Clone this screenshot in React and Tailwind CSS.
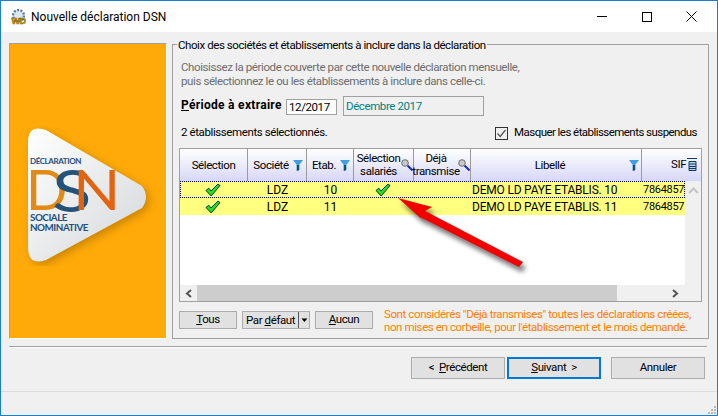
const ui = { fontFamily: 'Roboto, "Liberation Sans", sans-serif' };

function Check() {
  return (
    <svg width="16" height="14" viewBox="0 0 16 14" className="block">
      <path d="M1 7.5 L3.8 5.2 L6 8 L13 1 L15 2.6 L6.2 13 Z" fill="#22e02a" stroke="#0c3a0c" strokeWidth="1" strokeLinejoin="round" />
    </svg>
  );
}

function Funnel() {
  return (
    <svg width="10" height="11" viewBox="0 0 10 11" className="block">
      <path d="M0 0 H10 L6.2 5 V10 L3.8 11 V5 Z" fill="#3f9fe0" />
      <path d="M3.8 5 L6.2 5 V10 L3.8 11 Z" fill="#17506f" />
    </svg>
  );
}

function Lens() {
  return (
    <svg width="12" height="12" viewBox="0 0 12 12" className="block">
      <line x1="6.5" y1="6.5" x2="11.5" y2="11.5" stroke="#1c28c8" strokeWidth="2" />
      <circle cx="4" cy="4" r="3.3" fill="#c9c9c9" stroke="#6d6d6d" strokeWidth="1" />
    </svg>
  );
}

function ColumnsIcon() {
  return (
    <svg width="10" height="13" viewBox="0 0 10 13" className="block">
      <path d="M0 0.5 H10 M2 3.5 H9 V12.5 H2 Z M2 6 H9 M2 8.5 H9 M2 10.5 H9" fill="#b9d2ea" stroke="#123a66" strokeWidth="1" />
    </svg>
  );
}

function Logo() {
  return (
    <svg width="140" height="140" viewBox="0 0 140 140" className="block">
      <defs>
        <linearGradient id="tri" x1="0" y1="0" x2="1" y2="1">
          <stop offset="0" stopColor="#ffffff" />
          <stop offset="1" stopColor="#d3d7da" />
        </linearGradient>
        <filter id="soft" x="-20%" y="-20%" width="140%" height="140%">
          <feGaussianBlur stdDeviation="4" />
        </filter>
      </defs>
      <path d="M8 16 Q8 -2 26 4 L122 60 Q130 71 122 82 L26 134 Q8 140 8 122 Z" fill="#9a6400" opacity="0.55" filter="url(#soft)" transform="translate(3 3)" />
      <path d="M8 16 Q8 -2 26 4 L122 60 Q130 71 122 82 L26 134 Q8 140 8 122 Z" fill="url(#tri)" />
      <text x="10" y="38" fontFamily="Lato, sans-serif" fontWeight="700" fontSize="7.5" fill="#24507e" textLength="51" lengthAdjust="spacingAndGlyphs">DÉCLARATION</text>
      <text x="6" y="84" fontFamily="Lato, sans-serif" fontSize="56" fontWeight="400" fill="#e08a17" textLength="41" lengthAdjust="spacingAndGlyphs">D</text>
      <text x="32" y="86" fontFamily="Lato, sans-serif" fontSize="59" fontWeight="400" fill="#245278" textLength="39" lengthAdjust="spacingAndGlyphs">S</text>
      <text x="53" y="84" fontFamily="Lato, sans-serif" fontSize="56" fontWeight="400" fill="#e4630f" textLength="47" lengthAdjust="spacingAndGlyphs">N</text>
      <text x="10" y="95" fontFamily="Lato, sans-serif" fontWeight="700" fontSize="8.5" fill="#24507e" textLength="37" lengthAdjust="spacingAndGlyphs">SOCIALE</text>
      <text x="10" y="105" fontFamily="Lato, sans-serif" fontWeight="700" fontSize="8.5" fill="#24507e" textLength="58" lengthAdjust="spacingAndGlyphs">NOMINATIVE</text>
    </svg>
  );
}

function Arrow() {
  return (
    <svg width="150" height="90" viewBox="0 0 150 90" className="absolute left-[385px] top-[190px] pointer-events-none">
      <defs>
        <filter id="arrowShadow" x="-20%" y="-30%" width="140%" height="160%">
          <feGaussianBlur stdDeviation="2.5" />
        </filter>
      </defs>
      <path d="M12 7 L46 16 L39 20 L137 71 L133 76 L34 26 L39 31 Z" fill="#000" opacity="0.55" filter="url(#arrowShadow)" transform="translate(3 5)" />
      <path d="M12 7 L46 16 L39 20 L137 71 L133 76 L34 26 L39 31 Z" fill="#f40000" />
    </svg>
  );
}

function HeaderCell({ children, border = true }) {
  return (
    <div className={`relative h-[32px] flex items-center justify-center text-center leading-[13px] whitespace-nowrap bg-gradient-to-b from-white to-[#d7d7f7] ${border ? 'border-r border-[#9a9a9a]' : ''}`}>
      {children}
    </div>
  );
}

function Row({ etab, salaries, focused }) {
  return (
    <div className={`grid grid-cols-[68px_59px_47px_60px_57px_171px_43px] h-[17px] bg-[#ffff80] items-center text-center overflow-hidden ${focused ? 'outline-1 -outline-offset-1 outline-dotted outline-[#000080]' : ''}`}>
      <div className="flex justify-center pr-[2px]"><Check /></div>
      <div className="text-[12px] tracking-normal">LDZ</div>
      <div className="text-[12px] tracking-normal">{etab}</div>
      <div className="flex justify-center pr-[3px]">{salaries && <Check />}</div>
      <div />
      <div className="text-left pl-[1px] whitespace-nowrap text-[12px] tracking-[-0.2px]">DEMO LD PAYE ETABLIS. {etab}</div>
      <div className="text-left pl-[1px] whitespace-nowrap text-[11px] tracking-[-0.3px]">7864857</div>
    </div>
  );
}

function Btn({ children, className = '' }) {
  return (
    <button className={`border border-[#adadad] bg-[#e1e1e1] flex items-center justify-center text-black whitespace-nowrap tracking-[-0.4px] ${className}`}>
      {children}
    </button>
  );
}

export default function App() {
  return (
    <div style={ui} className="relative w-[718px] h-[416px] overflow-hidden bg-[#f0f0f0] border border-[#1a7fce] text-[11.5px] tracking-[-0.4px] text-black flex flex-col">
      <div className="h-[31px] bg-white flex items-center shrink-0">
        <svg width="17" height="16" viewBox="0 0 17 16" className="ml-[9px] mr-[4px]">
          <circle cx="8.5" cy="6.5" r="5.5" fill="#dfe6ee" stroke="#5b7da3" strokeDasharray="2 1.4" strokeWidth="2.4" />
          <text x="8.5" y="14.5" textAnchor="middle" fontFamily="Liberation Sans, sans-serif" fontWeight="700" fontSize="9" fill="#f0b010" stroke="#6a4c00" strokeWidth="0.5">WD</text>
        </svg>
        <span className="text-[12px] tracking-normal">Nouvelle déclaration DSN</span>
        <div className="ml-auto mr-[3px] flex items-center">
          <div className="w-[45px] h-[30px] flex items-center justify-center">
            <div className="w-[10px] h-px bg-black" />
          </div>
          <div className="w-[45px] h-[30px] flex items-center justify-center">
            <div className="w-[10px] h-[10px] border border-black" />
          </div>
          <div className="w-[45px] h-[30px] flex items-center justify-center">
            <svg width="11" height="11" viewBox="0 0 11 11"><path d="M0.5 0.5 L10.5 10.5 M10.5 0.5 L0.5 10.5" stroke="#000" /></svg>
          </div>
        </div>
      </div>

      <div className="flex pl-[8px] pt-[11px] gap-[5px]">
        <div className="w-[158px] h-[296px] bg-[#ffaa08] border border-[#a0a0a0] border-b-white border-r-white flex items-center shrink-0 pl-[10px] pt-[10px]">
          <Logo />
        </div>

        <div className="relative w-[537px] h-[295px] mt-[1px] border border-[#a0a0a0] px-[6px] pt-[15px]">
          <div className="absolute left-[4px] -top-[7px] bg-[#f0f0f0] px-[1px] leading-[14px] whitespace-nowrap tracking-[-0.43px]">Choix des sociétés et établissements à inclure dans la déclaration</div>
          <div className="pl-[2px] text-[#6d6d6d] leading-[14px]">
            <div>Choisissez la période couverte par cette nouvelle déclaration mensuelle,</div>
            <div>puis sélectionnez le ou les établissements à inclure dans celle-ci.</div>
          </div>
          <div className="flex items-end mt-[8px] h-[20px] pl-[2px]">
            <span className="font-bold w-[105px] mb-[2px] text-[12px] tracking-[0.3px] whitespace-nowrap"><u>P</u>ériode à extraire</span>
            <div className="w-[51px] h-[16px] mb-[1px] bg-white border border-[#a0a0a0] pl-[2px] leading-[14px]">12/2017</div>
            <div className="w-[141px] h-[20px] ml-[6px] border border-[#a0a0a0] pl-[2px] leading-[18px] text-[#008080]">Décembre 2017</div>
          </div>
          <div className="flex items-center mt-[8px] h-[18px] pl-[2px]">
            <span>2 établissements sélectionnés.</span>
            <div className="ml-auto flex items-center gap-[6px] pr-[5px]">
              <div className="w-[13px] h-[13px] border border-[#333] bg-[#f0f0f0] flex items-center justify-center">
                <svg width="11" height="11" viewBox="0 0 11 11"><path d="M1.5 5.5 L4.2 8.5 L9.5 2" fill="none" stroke="#555" strokeWidth="1.2" /></svg>
              </div>
              <span className="tracking-[-0.55px]">Masquer les établissements suspendus</span>
            </div>
          </div>

          <div className="relative w-[523px] h-[154px] mt-[6px] border border-[#a0a0a0] bg-white overflow-hidden">
            <div className="grid grid-cols-[68px_59px_47px_60px_57px_171px_60px]">
              <HeaderCell>Sélection</HeaderCell>
              <HeaderCell>
                <span className="pr-[12px]">Société</span>
                <span className="absolute right-[3px] top-[11px]"><Funnel /></span>
              </HeaderCell>
              <HeaderCell>
                <span className="pr-[12px]">Etab.</span>
                <span className="absolute right-[3px] top-[11px]"><Funnel /></span>
              </HeaderCell>
              <HeaderCell>
                <span className="pr-[10px]">Sélection<br />salariés</span>
                <span className="absolute right-0 top-[10px]"><Lens /></span>
              </HeaderCell>
              <HeaderCell>
                <span className="pr-[12px]">Déjà<br />transmise</span>
                <span className="absolute right-0 top-[10px]"><Lens /></span>
              </HeaderCell>
              <HeaderCell>
                <span className="pr-[12px]">Libellé</span>
                <span className="absolute right-[2px] top-[11px]"><Funnel /></span>
              </HeaderCell>
              <HeaderCell border={false}>
                <span className="absolute left-[29px] top-[9px]">SIF</span>
                <span className="absolute left-[45px] top-[9px]"><ColumnsIcon /></span>
              </HeaderCell>
            </div>
            <div className="w-[505px] shadow-[0_-1px_0_#9a9a9a]">
              <Row etab="10" salaries focused />
              <Row etab="11" />
            </div>
            {/* scrollbars sit over the grid */}
            <div className="absolute left-[505px] top-[32px] bottom-0 right-0 bg-[#f0f0f0] flex justify-center pt-[6px]">
              <svg width="11" height="7" viewBox="0 0 11 7"><path d="M1 6 L5.5 1.5 L10 6" fill="none" stroke="#c4c4c4" strokeWidth="2" /></svg>
            </div>
            <div className="absolute left-0 right-0 bottom-0 h-[16px] bg-[#f0f0f0] flex items-center">
              <svg width="7" height="9" viewBox="0 0 7 9" className="ml-[5px]"><path d="M6 1 L2 4.5 L6 8" fill="none" stroke="#555" strokeWidth="2" /></svg>
              <div className="ml-[5px] w-[420px] h-full bg-[#cdcdcd]" />
              <svg width="7" height="9" viewBox="0 0 7 9" className="ml-[55px]"><path d="M1 1 L5 4.5 L1 8" fill="none" stroke="#555" strokeWidth="2" /></svg>
            </div>
          </div>

          <div className="flex items-start mt-[9px]">
            <Btn className="w-[58px] h-[18px]"><span><u>T</u>ous</span></Btn>
            <div className="ml-[5px] w-[68px] h-[18px] border border-[#adadad] bg-[#e1e1e1] flex items-center whitespace-nowrap">
              <span className="w-[57px] border-r border-[#555] text-center h-full leading-[16px]">Par <u>d</u>éfaut</span>
              <svg width="9" height="5" viewBox="0 0 9 5" className="ml-px"><path d="M1.5 0.5 H7.5 L4.5 4 Z" fill="#000" /></svg>
            </div>
            <Btn className="ml-[5px] w-[58px] h-[18px]"><span><u>A</u>ucun</span></Btn>
            <div className="ml-[11px] text-[#ff7f00] leading-[13px] -mt-[3px] whitespace-nowrap">
              <div>Sont considérés "Déjà transmises" toutes les déclarations créées,</div>
              <div>non mises en corbeille, pour l'établissement et le mois demandé.</div>
            </div>
          </div>
        </div>
      </div>

      <div className="mx-[8px] mt-[7px] h-[2px] w-[698px] border-t border-[#a0a0a0] border-b border-b-white" />

      <div className="flex mt-[9px] pl-[410px]">
        <Btn className="w-[94px] h-[22px]"><span>&lt; &nbsp;<u>P</u>récédent</span></Btn>
        <Btn className="w-[94px] h-[22px] ml-[2px] border-2 !border-[#0078d7]"><span><u>S</u>uivant &nbsp;&gt;</span></Btn>
        <Btn className="w-[94px] h-[22px] ml-[10px]"><span>Annuler</span></Btn>
      </div>

      <div className="mt-[12px] h-px bg-[#dcdcdc]" />

      <div className="absolute right-[1px] bottom-[1px] grid grid-cols-3 gap-px">
        <div />
        <div />
        <div className="w-[2px] h-[2px] bg-[#b8b8b8]" />
        <div />
        <div className="w-[2px] h-[2px] bg-[#b8b8b8]" />
        <div className="w-[2px] h-[2px] bg-[#b8b8b8]" />
        <div className="w-[2px] h-[2px] bg-[#b8b8b8]" />
        <div className="w-[2px] h-[2px] bg-[#b8b8b8]" />
        <div className="w-[2px] h-[2px] bg-[#b8b8b8]" />
      </div>

      <Arrow />
    </div>
  );
}
